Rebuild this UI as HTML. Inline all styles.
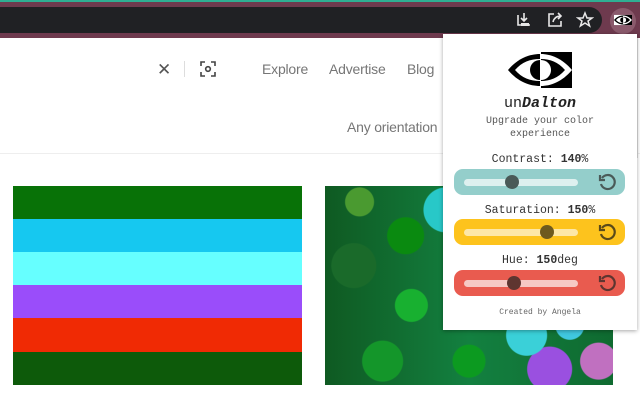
<!DOCTYPE html>
<html><head><meta charset="utf-8"><style>
*{margin:0;padding:0;box-sizing:border-box}
body{width:640px;height:400px;overflow:hidden;background:#fff;font-family:"Liberation Sans",sans-serif;position:relative}
.abs{position:absolute}
.mono{font-family:"Liberation Mono","DejaVu Sans Mono",monospace}
.nav{color:#767676;font-size:14px;letter-spacing:-0.2px}
.bar{position:absolute;left:454px;width:171px;height:26px;border-radius:9px}
.track{position:absolute;left:10px;top:10px;width:114px;height:7px;border-radius:4px}
.thumb{position:absolute;top:6px;width:14px;height:14px;border-radius:50%}
.reset{position:absolute;right:9px;top:4px}
.lbl{position:absolute;left:443px;width:194px;text-align:center;font-size:11.5px;color:#333}
</style></head><body>
<div class="abs" style="left:0;top:0;width:640px;height:38px;background:#6e3a4e"></div>
<div class="abs" style="left:0;top:0;width:640px;height:2px;background:#2fae93"></div>
<div class="abs" style="left:0;top:7px;width:602px;height:26px;background:#202124;border-radius:0 13px 13px 0"></div>
<svg class="abs" style="left:515px;top:11px" width="18" height="18" viewBox="0 0 18 18" fill="none" stroke="#e8e8e8" stroke-width="1.6"><path d="M3 4v10h12M9 2v8M6 7l3 3 3-3"/><rect x="6" y="12" width="8" height="3" fill="#e8e8e8" stroke="none"/></svg>
<svg class="abs" style="left:546px;top:11px" width="18" height="18" viewBox="0 0 18 18" fill="none" stroke="#e8e8e8" stroke-width="1.6"><path d="M8 3H3v12h12v-5"/><path d="M7 11c1-4 4-6 8-6M12 2l3 3-3 3"/></svg>
<svg class="abs" style="left:576px;top:11px" width="18" height="18" viewBox="0 0 18 18"><path d="M9 2l2 5h5l-4 3 1.6 5L9 12l-4.6 3L6 10 2 7h5z" fill="none" stroke="#e8e8e8" stroke-width="1.5"/></svg>
<div class="abs" style="left:610px;top:8px;width:26px;height:26px;border-radius:50%;background:#8a5a6c"></div>
<svg class="abs" style="left:614px;top:13px" width="18" height="14" viewBox="0 0 64 36"><rect width="64" height="36" fill="#fff"/><rect x="32" width="32" height="36" fill="#000"/><path d="M0 18C10 6 22 2 32 2V34C22 34 10 30 0 18Z" fill="#000"/><path d="M7 18C14 10 22 7 32 7V29C22 29 14 26 7 18Z" fill="#fff"/><path d="M32 8A10 10 0 0 0 32 28Z" fill="#000"/><path d="M64 18C54 6 42 2 32 2V34C42 34 54 30 64 18Z" fill="#fff"/><path d="M57 18C50 10 42 7 33 7V29C42 29 50 26 57 18Z" fill="#000"/><path d="M33 8A10 10 0 0 1 33 28Z" fill="#fff"/></svg>
<div class="abs" style="left:157px;top:60px;font-size:17px;color:#555">✕</div>
<div class="abs" style="left:184px;top:61px;width:1px;height:16px;background:#ddd"></div>
<svg class="abs" style="left:200px;top:61px" width="16" height="16" viewBox="0 0 16 16" fill="none" stroke="#444" stroke-width="1.6"><path d="M1 5V1h4M11 1h4v4M15 11v4h-4M5 15H1v-4"/><circle cx="8" cy="8" r="2.3"/></svg>
<div class="abs nav" style="left:262px;top:61px">Explore</div>
<div class="abs nav" style="left:329px;top:61px">Advertise</div>
<div class="abs nav" style="left:407px;top:61px">Blog</div>
<div class="abs nav" style="left:347px;top:119px">Any orientation</div>
<div class="abs" style="left:0;top:153px;width:640px;height:1px;background:#eee"></div>
<div class="abs" style="left:13px;top:186px;width:289px;height:199px">
<div style="height:33px;background:#087207"></div>
<div style="height:33px;background:#16c8f0"></div>
<div style="height:33px;background:#66ffff"></div>
<div style="height:33px;background:#9a4dfa"></div>
<div style="height:34px;background:#f02a04"></div>
<div style="height:33px;background:#0d5a0a"></div>
</div>
<div class="abs" style="left:325px;top:186px;width:288px;height:199px;overflow:hidden;background:#0b3d1c">
<div class="abs" style="left:0;top:0;width:288px;height:199px;background:
radial-gradient(circle at 12% 8%,#4a9a30 0 14px,transparent 15px),
radial-gradient(circle at 28% 25%,#0a8a10 0 18px,transparent 19px),
radial-gradient(circle at 42% 12%,#28c8c8 0 22px,transparent 23px),
radial-gradient(circle at 10% 40%,#1a6a2a 0 22px,transparent 23px),
radial-gradient(circle at 30% 60%,#18b030 0 16px,transparent 17px),
radial-gradient(circle at 50% 58%,#40d0e0 0 14px,transparent 15px),
radial-gradient(circle at 70% 75%,#3ad0d8 0 20px,transparent 21px),
radial-gradient(circle at 85% 70%,#40c8e0 0 14px,transparent 15px),
radial-gradient(circle at 20% 88%,#14962a 0 20px,transparent 21px),
radial-gradient(circle at 50% 88%,#0c9a20 0 16px,transparent 17px),
radial-gradient(circle at 78% 92%,#9a50e0 0 22px,transparent 23px),
radial-gradient(circle at 95% 88%,#c070c0 0 18px,transparent 19px),
linear-gradient(90deg,#0f5a22,#138040,#0f6a30)"></div>
</div>
<div class="abs" style="left:637px;top:38px;width:1px;height:120px;background:#ddd"></div>
<div class="abs" style="left:443px;top:34px;width:194px;height:296px;background:#fff;box-shadow:0 1px 4px rgba(0,0,0,.35)"></div>
<svg class="abs" style="left:508px;top:52px" width="64" height="36" viewBox="0 0 64 36"><rect width="64" height="36" fill="#fff"/><rect x="33" width="31" height="36" fill="#000"/><path d="M0 18C10 6 22 2 32 2V34C22 34 10 30 0 18Z" fill="#000"/><path d="M7 18C14 10 22 7 32 7V29C22 29 14 26 7 18Z" fill="#fff"/><path d="M32 8A10 10 0 0 0 32 28Z" fill="#000"/><path d="M64 18C54 6 42 2 33 2V34C42 34 54 30 64 18Z" fill="#fff"/><path d="M57 18C50 10 42 7 33 7V29C42 29 50 26 57 18Z" fill="#000"/><path d="M33 8A10 10 0 0 1 33 28Z" fill="#fff"/></svg>
<div class="lbl mono" style="top:95px;font-size:15px;color:#222">un<i style="font-weight:bold">Dalton</i></div>
<div class="lbl mono" style="top:115px;font-size:10px;color:#555;line-height:13px">Upgrade your color<br>experience</div>
<div class="lbl mono" style="top:153px">Contrast: <b>140</b>%</div>
<div class="bar" style="top:169px;background:#94cecb"><div class="track" style="background:#def0ef"></div><div class="thumb" style="left:51px;background:#4a5a58"></div>
<svg class="reset" width="18" height="18" viewBox="0 0 18 18" fill="none" stroke="#4a5a58" stroke-width="2.2"><path d="M4 5A7 7 0 1 1 3 11"/><path d="M2 2v5h5" fill="none"/></svg></div>
<div class="lbl mono" style="top:204px">Saturation: <b>150</b>%</div>
<div class="bar" style="top:219px;background:#fdc31d"><div class="track" style="background:#fde7a8"></div><div class="thumb" style="left:86px;background:#6e5a1e"></div>
<svg class="reset" width="18" height="18" viewBox="0 0 18 18" fill="none" stroke="#5a4a1a" stroke-width="2.2"><path d="M4 5A7 7 0 1 1 3 11"/><path d="M2 2v5h5"/></svg></div>
<div class="lbl mono" style="top:254px">Hue: <b>150</b>deg</div>
<div class="bar" style="top:270px;background:#e95b4f"><div class="track" style="background:#f6c9c4"></div><div class="thumb" style="left:53px;background:#5e3530"></div>
<svg class="reset" width="18" height="18" viewBox="0 0 18 18" fill="none" stroke="#5e3530" stroke-width="2.2"><path d="M4 5A7 7 0 1 1 3 11"/><path d="M2 2v5h5"/></svg></div>
<div class="lbl mono" style="top:308px;font-size:8px;color:#666">Created by Angela</div>
</body></html>
